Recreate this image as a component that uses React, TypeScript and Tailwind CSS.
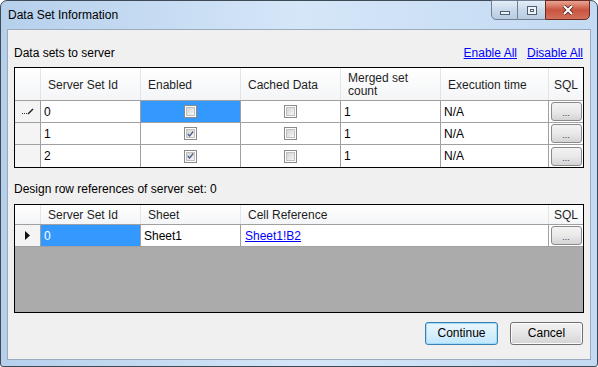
import React from 'react';

interface ServerSet {
  id: number;
  enabled: boolean;
  cached: boolean;
  merged: number;
  exec: string;
}

const serverSets: ServerSet[] = [
  { id: 0, enabled: false, cached: false, merged: 1, exec: 'N/A' },
  { id: 1, enabled: true, cached: false, merged: 1, exec: 'N/A' },
  { id: 2, enabled: true, cached: false, merged: 1, exec: 'N/A' },
];

const CheckBox: React.FC<{ checked: boolean }> = ({ checked }) => (
  <div className="w-[13px] h-[13px] border border-[#8a8a8a] bg-white p-px">
    <div className="w-full h-full bg-gradient-to-br from-[#d4d4d4] to-[#f6f6f6] border border-[#c0c0c0] flex items-center justify-center">
      {checked && (
        <svg width="9" height="8" viewBox="0 0 9 8">
          <path d="M1 4 L3.3 6.5 L8 0.8" fill="none" stroke="#4a5c8a" strokeWidth="1.6" />
        </svg>
      )}
    </div>
  </div>
);

const DotsButton: React.FC = () => (
  <div className="w-[31px] h-[19px] rounded-[3px] border border-[#8a8a8a] bg-gradient-to-b from-[#f3f3f3] via-[#e9e9e9] to-[#d4d4d4] flex items-end justify-center pb-[2px] text-[9px] leading-[9px] text-[#3a2a5a]">
    ...
  </div>
);

// header cell for the data grids
const Head: React.FC<{ w: string; children?: React.ReactNode; last?: boolean; center?: boolean }> = ({ w, children, last, center }) => (
  <div
    className={`${w} h-full flex items-center pt-[2px] ${center ? 'justify-center' : 'pl-[7px]'} leading-[13px] ${
      last ? '' : 'border-r border-[#e2e4e8]'
    }`}
  >
    {children}
  </div>
);

const Cell: React.FC<{ w: string; children?: React.ReactNode; last?: boolean; className?: string }> = ({ w, children, last, className = '' }) => (
  <div className={`${w} h-full flex items-center ${last ? '' : 'border-r border-[#a0a0a0]'} ${className}`}>
    {children}
  </div>
);

const PencilMark = () => (
  <svg width="12" height="7" viewBox="0 0 12 7">
    <rect x="0" y="5" width="1" height="1" fill="#333" />
    <rect x="2" y="5" width="1" height="1" fill="#333" />
    <rect x="4" y="5" width="1" height="1" fill="#333" />
    <path d="M6 6 L11 1" stroke="#222" strokeWidth="1.4" />
  </svg>
);

const CaptionButtons = () => (
  <div className="absolute top-[-1px] right-[7px] flex h-[20px]">
    <div className="w-[27px] h-full rounded-bl-[5px] border border-[#6f7f91] bg-gradient-to-b from-[#e4eef8] via-[#c9d9ea] to-[#b7cbe0] flex items-center justify-center">
      <div className="w-[10px] h-[4px] mt-[5px] bg-[#eef3f8] border border-[#4e5f73]" />
    </div>
    <div className="w-[27px] h-full border-y border-[#6f7f91] bg-gradient-to-b from-[#e4eef8] via-[#c9d9ea] to-[#b7cbe0] flex items-center justify-center">
      <div className="w-[10px] h-[9px] border border-[#4e5f73] bg-[#eef3f8] p-[2px]">
        <div className="w-full h-full border border-[#4e5f73]" />
      </div>
    </div>
    <div className="w-[45px] h-full rounded-br-[5px] border border-[#6b2a24] bg-gradient-to-b from-[#e8a493] via-[#c9543e] to-[#d2705c] flex items-center justify-center">
      <svg width="12" height="10" viewBox="0 0 12 10">
        <path d="M2 1 L10 9 M10 1 L2 9" stroke="#3b1a16" strokeWidth="3.6" />
        <path d="M2 1 L10 9 M10 1 L2 9" stroke="#ffffff" strokeWidth="2.2" />
      </svg>
    </div>
  </div>
);

export default function App() {
  return (
    <div className="w-[598px] h-[367px] bg-white font-['Liberation_Sans',Arial,sans-serif] text-[12px] text-black">
      <div className="relative w-full h-full flex flex-col px-[6px] pb-[6px] rounded-t-[7px] rounded-b-[3px] border border-[#3f4a57] bg-gradient-to-r from-[#b6d0ec] via-[#d5e6f8] to-[#c3daf2]">
        {/* Title bar */}
        <div className="h-[28px] flex items-center pl-[1px] text-[12px]">Data Set Information</div>
        <CaptionButtons />

        {/* Client area */}
        <div className="flex-1 flex flex-col border border-[#9aabbe] bg-[#f0f0f0] px-[6px] pt-[16px]">
          <div className="h-[15px] flex items-center justify-between leading-[15px]">
            <span>Data sets to server</span>
            <div className="flex gap-[10px] pr-[1px]">
              <span className="text-[#0000ff] underline">Enable All</span>
              <span className="text-[#0000ff] underline">Disable All</span>
            </div>
          </div>

          {/* Grid 1 */}
          <div className="mt-[6px] h-[101px] border border-black bg-white flex flex-col">
            <div className="h-[33px] flex border-b border-[#a0a0a0] bg-gradient-to-b from-white to-[#f4f5f7] text-[#1e1e1e]">
              <Head w="w-[26px]" />
              <Head w="w-[100px]">Server Set Id</Head>
              <Head w="w-[100px]">Enabled</Head>
              <Head w="w-[100px]">Cached Data</Head>
              <Head w="w-[100px]">
                <span>Merged set<br />count</span>
              </Head>
              <Head w="w-[108px]">Execution time</Head>
              <Head w="flex-1" last center>SQL</Head>
            </div>
            {serverSets.map((s, i) => (
              <div key={s.id} className={`h-[22px] flex ${i < 2 ? 'border-b border-[#a0a0a0]' : ''}`}>
                <Cell w="w-[26px]" className="bg-[#f4f4f4] justify-center">
                  {i === 0 && <PencilMark />}
                </Cell>
                <Cell w="w-[100px]" className="pl-[3px]">{s.id}</Cell>
                <Cell w="w-[100px]" className={`justify-center ${i === 0 ? 'bg-[#3399ff]' : ''}`}>
                  <CheckBox checked={s.enabled} />
                </Cell>
                <Cell w="w-[100px]" className="justify-center">
                  <CheckBox checked={s.cached} />
                </Cell>
                <Cell w="w-[100px]" className="pl-[3px]">{s.merged}</Cell>
                <Cell w="w-[108px]" className="pl-[3px]">{s.exec}</Cell>
                <Cell w="flex-1" last className="justify-center">
                  <DotsButton />
                </Cell>
              </div>
            ))}
          </div>

          <div className="mt-[14px] h-[15px] leading-[15px]">Design row references of server set: 0</div>

          {/* Grid 2 */}
          <div className="mt-[7px] h-[109px] border border-black bg-[#ababab] flex flex-col">
            <div className="h-[20px] flex border-b border-[#a0a0a0] bg-gradient-to-b from-white to-[#f4f5f7] text-[#1e1e1e]">
              <Head w="w-[26px]" />
              <Head w="w-[100px]">Server Set Id</Head>
              <Head w="w-[100px]">Sheet</Head>
              <Head w="w-[308px]">Cell Reference</Head>
              <Head w="flex-1" last center>SQL</Head>
            </div>
            <div className="h-[22px] flex bg-white border-b border-[#a0a0a0]">
              <Cell w="w-[26px]" className="bg-[#f4f4f4] justify-center">
                <svg width="5" height="9" viewBox="0 0 5 9">
                  <path d="M0 0 L5 4.5 L0 9 Z" fill="#111" />
                </svg>
              </Cell>
              <Cell w="w-[100px]" className="pl-[3px] bg-[#3399ff] text-white">0</Cell>
              <Cell w="w-[100px]" className="pl-[3px]">Sheet1</Cell>
              <Cell w="w-[308px]" className="pl-[4px]">
                <span className="text-[#0000ff] underline">Sheet1!B2</span>
              </Cell>
              <Cell w="flex-1" last className="justify-center">
                <DotsButton />
              </Cell>
            </div>
          </div>

          {/* Buttons */}
          <div className="mt-[9px] flex justify-end gap-[12px] pr-[1px]">
            <button className="w-[73px] h-[23px] rounded-[3px] border border-[#3c7fb1] bg-gradient-to-b from-[#eaf6fd] via-[#d9f0fc] to-[#bee6fd] shadow-[inset_0_0_0_1px_#9fdcf8] leading-[21px] text-center">
              Continue
            </button>
            <button className="w-[73px] h-[23px] rounded-[3px] border border-[#707070] bg-gradient-to-b from-[#f2f2f2] via-[#e6e6e6] to-[#d4d4d4] shadow-[inset_0_0_0_1px_#fbfbfb] leading-[21px] text-center">
              Cancel
            </button>
          </div>
        </div>
      </div>
    </div>
  );
}
